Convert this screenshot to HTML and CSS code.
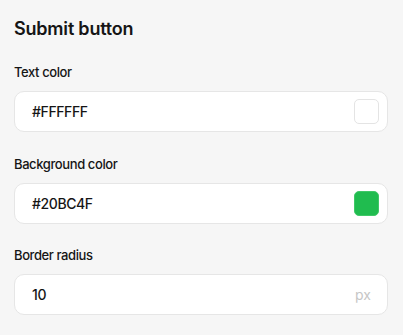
FILE: index.html
```html
<!DOCTYPE html>
<html>
<head>
<meta charset="utf-8">
<link rel="stylesheet" href="styles.css">
</head>
<body>
<div class="panel">
  <h2 class="title">Submit button</h2>
  <div class="field">
    <div class="label">Text color</div>
    <div class="input">
      <span class="value">#FFFFFF</span>
      <span class="swatch swatch-white"></span>
    </div>
  </div>
  <div class="field">
    <div class="label">Background color</div>
    <div class="input">
      <span class="value">#20BC4F</span>
      <span class="swatch swatch-green"></span>
    </div>
  </div>
  <div class="field">
    <div class="label">Border radius</div>
    <div class="input">
      <span class="value">10</span>
      <span class="unit">px</span>
    </div>
  </div>
</div>
</body>
</html>
```
FILE: styles.css
```css
html, body {
  margin: 0;
  padding: 0;
  background: #f6f6f6;
}
body {
  font-family: Inter, "Noto Sans", sans-serif;
  color: #151515;
}
.panel {
  padding: 17px 15px 0 14px;
  display: flex;
  flex-direction: column;
}
.title {
  margin: 0 0 22px 0;
  font-size: 18px;
  line-height: 24px;
  font-weight: 600;
  letter-spacing: -0.2px;
}
.field {
  display: flex;
  flex-direction: column;
  gap: 10px;
  margin-bottom: 22.5px;
}
.label {
  font-size: 13px;
  line-height: 18px;
  font-weight: 500;
  letter-spacing: -0.4px;
}
.input {
  box-sizing: border-box;
  height: 41px;
  background: #fff;
  border: 1px solid #e6e6e6;
  border-radius: 10px;
  display: flex;
  align-items: center;
  justify-content: space-between;
  padding: 0 8px 0 17px;
}
.value {
  font-size: 14px;
  font-weight: 500;
  letter-spacing: -0.4px;
}
.swatch {
  box-sizing: border-box;
  width: 25px;
  height: 25px;
  border-radius: 5px;
}
.swatch-white {
  background: #fff;
  border: 1px solid #e4e4e4;
}
.swatch-green {
  background: #20bc4f;
  border: 1px solid #3fc867;
}
.unit {
  font-size: 14px;
  color: #c6c6c6;
  margin-right: 8px;
}
```
